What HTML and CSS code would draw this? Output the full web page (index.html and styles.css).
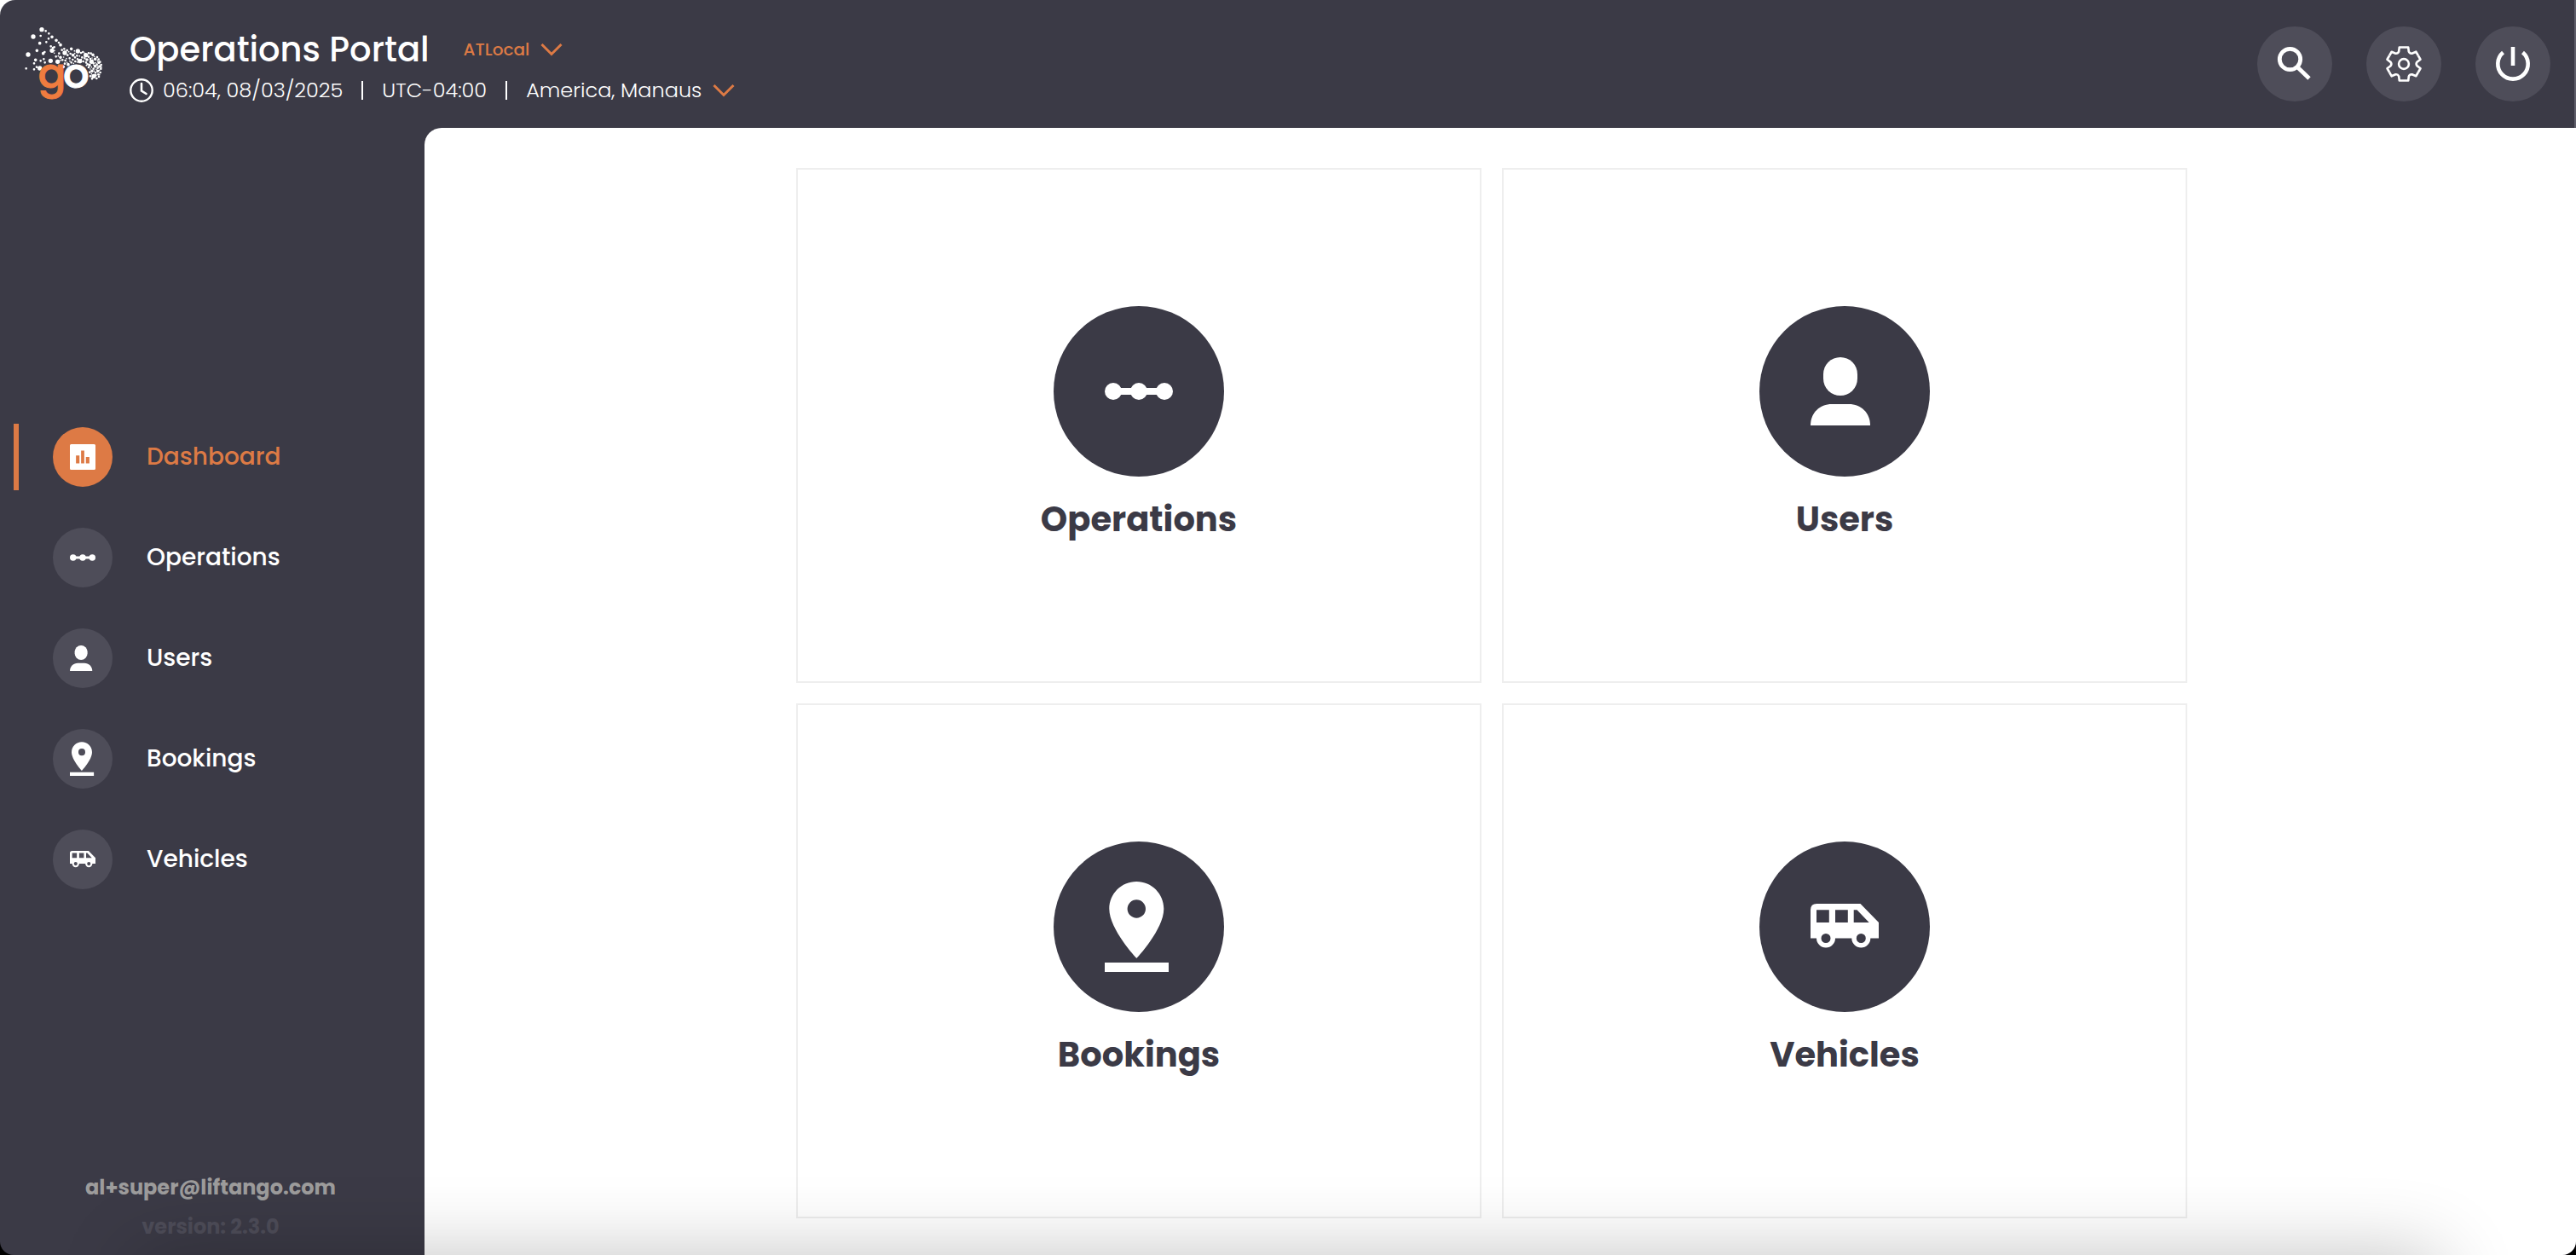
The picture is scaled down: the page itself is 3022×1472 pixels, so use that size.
FILE: index.html
```html
<!DOCTYPE html>
<html lang="en">
<head>
<meta charset="utf-8">
<meta name="viewport" content="width=device-width, initial-scale=1">
<title>Operations Portal</title>
<link rel="stylesheet" href="styles.css">
</head>
<body>
<svg class="sprite" aria-hidden="true">
  <symbol id="i-dashboard" viewBox="0 0 80 80"><path fill-rule="evenodd" d="M4 0H76Q80 0 80 4V76Q80 80 76 80H4Q0 80 0 76V4Q0 0 4 0ZM19 35V60H30V35ZM35 20V60H45V20ZM50 40V60H61V40Z"/></symbol>
  <symbol id="i-operations" viewBox="0 0 80 80"><circle cx="10" cy="40" r="10"/><circle cx="40" cy="40" r="10"/><circle cx="70" cy="40" r="10"/><path d="M10 36H70V44H10Z"/></symbol>
  <symbol id="i-users" viewBox="0 0 80 80"><rect x="15" width="40" height="45" rx="20"/><path d="M0 80C0 65 11 55 25 55H45C59 55 70 65 70 80Z"/></symbol>
  <symbol id="i-bookings" viewBox="0 0 80 80" overflow="visible"><path fill-rule="evenodd" d="M37.3 -13C19.6 -13 5.3 1.3 5.3 19C5.3 43 37.3 77 37.3 77S69.3 43 69.3 19C69.3 1.3 55 -13 37.3 -13ZM37.3 8.3A10.7 10.7 0 1 1 37.3 29.7A10.7 10.7 0 1 1 37.3 8.3ZM0 82H75V93H0Z"/></symbol>
  <symbol id="i-vehicles" viewBox="0 0 80 80"><path fill-rule="evenodd" d="M7.3 13H58.5L80 35V53.5H70.3A11 11 0 0 1 48.3 53.5H29A11 11 0 0 1 7 53.5H0V20.3Q0 13 7.3 13ZM7 20.3V35H21.8V20.3ZM29 20.3V35H43.8V20.3ZM50.7 20.3V35H68.7L54.5 20.3ZM18 48A5.5 5.5 0 1 0 18 59A5.5 5.5 0 1 0 18 48ZM59.3 48A5.5 5.5 0 1 0 59.3 59A5.5 5.5 0 1 0 59.3 48Z"/></symbol>
  <symbol id="i-chevron" viewBox="0 0 26 16"><path d="M1.500 2L13 13.500L24.500 2" fill="none" stroke="currentColor" stroke-width="3"/></symbol>
  <symbol id="i-clock" viewBox="0 0 28 28"><circle cx="14" cy="14" r="12.700" fill="none" stroke="currentColor" stroke-width="2.400"/><path d="M14 6V14.500L19.500 18" fill="none" stroke="currentColor" stroke-width="2.600" stroke-linecap="round"/></symbol>
</svg>

<div class="app">
  <header class="header">
    <svg class="logo" viewBox="0 0 330 330" role="img" aria-label="go">
      <g fill="none" stroke="#fff" stroke-linecap="round">
        <path stroke-width="16" d="M87 44h0M57 69h0M39 132h0M80 180h0M123 118h0M118 154h0M143 157h0M168 126h0M214 120h0M242 134h0M221 155h0M262 157h0M270 208h0"/>
        <path stroke-width="11" d="M80 92h0M70 118h0M92 128h0M65 151h0M123 70h0M138 82h0M153 98h0M153 142h0M191 112h0M163 175h0M197 134h0M180 167h0M267 133h0M288 160h0M284 190h0M291 174h0M264 190h0M275 148h0M246 150h0M255 169h0M275 173h0"/>
        <path stroke-width="8" d="M101 49h0M112 58h0M83 66h0M103 88h0M111 76h0M147 90h0M119 103h0M131 106h0M126 108h0M97 123h0M83 154h0M94 148h0M60 163h0M60 184h0M32 181h0M69 176h0M98 160h0M137 139h0M148 128h0M158 116h0M166 112h0M176 117h0M178 134h0M188 129h0M185 145h0M196 150h0M204 142h0M211 136h0M225 126h0M232 123h0M229 142h0M238 145h0M170 153h0M160 151h0M168 164h0M191 160h0M205 156h0M213 148h0M233 156h0M243 160h0M252 140h0M252 127h0M260 128h0M258 147h0M269 163h0M282 141h0M287 149h0M292 158h0M281 167h0M296 168h0M295 182h0M293 195h0M288 210h0M280 216h0M264 217h0M258 208h0M276 196h0M256 194h0M269 182h0M284 179h0M252 177h0M248 166h0M277 205h0M286 202h0"/>
        <path stroke-width="5" d="M132 118h0M131 127h0M145 137h0M164 141h0M174 146h0M182 122h0M202 119h0M203 128h0M220 137h0M226 149h0M238 127h0M247 136h0M272 139h0M264 144h0M266 151h0M283 154h0M276 161h0M262 176h0M258 183h0M290 187h0M272 190h0M279 184h0M285 172h0M244 170h0M212 159h0M199 163h0M186 155h0M176 160h0M153 152h0M270 169h0M297 176h0M262 200h0M290 203h0"/>
      </g>
      <g class="logo-text"><text x="74" y="248" fill="#ef7c3f" stroke="#ef7c3f">g</text><text x="162" y="248" fill="#fff" stroke="#fff">o</text></g>
    </svg>

    <div class="heading">
      <div class="heading-top">
        <h1 class="title">Operations Portal</h1>
        <label class="picker picker-env">
          <select class="picker-select" aria-label="Environment"><option>ATLocal</option></select>
          <svg class="chevron"><use href="#i-chevron"/></svg>
        </label>
      </div>
      <div class="heading-meta">
        <svg class="clock" aria-hidden="true"><use href="#i-clock"/></svg>
        <time datetime="2025-03-08T06:04-04:00">06:04, 08/03/2025</time>
        <span class="divider"></span>
        <span>UTC-04:00</span>
        <span class="divider"></span>
        <label class="picker">
          <select class="picker-select" aria-label="Time zone"><option>America, Manaus</option></select>
          <svg class="chevron"><use href="#i-chevron"/></svg>
        </label>
      </div>
    </div>

    <div class="actions">
      <button class="action" type="button" aria-label="Search">
        <svg class="action-icon" viewBox="0 0 88 88"><circle cx="38.500" cy="38.500" r="12.200" stroke-width="4.800"/><path stroke-width="4.800" d="M48 48.500L61 61"/></svg>
      </button>
      <button class="action" type="button" aria-label="Settings">
        <svg class="action-icon" viewBox="-44 -44 88 88"><defs><path id="gear-tooth" d="M0 -19.500H5.200L5.800 -14.500Q7 -11.900 9.600 -12.300L14.300 -14.300L16.900 -9.750"/></defs>
          <g stroke-width="2.600" stroke-linejoin="round"><use href="#gear-tooth"/><use href="#gear-tooth" transform="rotate(60)"/><use href="#gear-tooth" transform="rotate(120)"/><use href="#gear-tooth" transform="rotate(180)"/><use href="#gear-tooth" transform="rotate(240)"/><use href="#gear-tooth" transform="rotate(300)"/><circle r="5.900"/></g></svg>
      </button>
      <button class="action" type="button" aria-label="Log out">
        <svg class="action-icon" viewBox="0 0 88 88"><path stroke-width="4.600" d="M32.500 30.500A17.700 17.700 0 1 0 55.500 30.500M44 24V46"/></svg>
      </button>
    </div>
  </header>

  <div class="body">
    <aside class="sidebar">
      <nav class="nav">
        <a class="nav-link nav-link-active" href="#dashboard" aria-current="page"><span class="nav-icon"><svg><use href="#i-dashboard"/></svg></span>Dashboard</a>
        <a class="nav-link" href="#operations"><span class="nav-icon"><svg><use href="#i-operations"/></svg></span>Operations</a>
        <a class="nav-link" href="#users"><span class="nav-icon"><svg><use href="#i-users"/></svg></span>Users</a>
        <a class="nav-link" href="#bookings"><span class="nav-icon"><svg><use href="#i-bookings"/></svg></span>Bookings</a>
        <a class="nav-link" href="#vehicles"><span class="nav-icon"><svg><use href="#i-vehicles"/></svg></span>Vehicles</a>
      </nav>
      <footer class="account">
        <p class="email">al+super@liftango.com</p>
        <p class="version">version: 2.3.0</p>
      </footer>
    </aside>

    <main class="main">
      <div class="cards">
        <a class="card" href="#operations"><span class="card-icon"><svg><use href="#i-operations"/></svg></span>Operations</a>
        <a class="card" href="#users"><span class="card-icon"><svg><use href="#i-users"/></svg></span>Users</a>
        <a class="card" href="#bookings"><span class="card-icon"><svg><use href="#i-bookings"/></svg></span>Bookings</a>
        <a class="card" href="#vehicles"><span class="card-icon"><svg><use href="#i-vehicles"/></svg></span>Vehicles</a>
      </div>
    </main>
  </div>
</div>
</body>
</html>
```
FILE: styles.css
```css
:root {
  --ink: #3b3a46;
  --ink-light: #4e4d59;
  --accent: #dd7a45;
}

* { box-sizing: border-box; }

html { background: linear-gradient(#fff 50%, #000 50%); }

body {
  margin: 0;
  font-family: Poppins, Inter, "Open Sans", sans-serif;
  color: #fff;
}

h1, p { margin: 0; }
a { color: inherit; text-decoration: none; }
svg { display: block; fill: currentColor; }
.sprite { position: absolute; width: 0; height: 0; }

.app {
  position: relative;
  display: flex;
  flex-direction: column;
  min-height: 100vh;
  overflow: hidden;
  background: var(--ink);
  border-radius: 18px 0 16px 16px;
}

/* soft shade along the bottom edge of the window */
.app::after {
  content: "";
  position: absolute;
  top: 100%;
  left: 160px;
  right: 160px;
  height: 160px;
  box-shadow: 0 0 90px rgba(0, 0, 0, 0.24);
  pointer-events: none;
}

.header {
  display: flex;
  align-items: center;
  height: 150px;
  padding: 0 28px 0 20px;
  border-right: 2px solid #5f5e6a;
}

.logo { width: 110px; height: 110px; margin-right: 22px; }
.logo-text { font-size: 144px; font-weight: 500; stroke-width: 3px; stroke-linejoin: round; }

.heading { padding-top: 2px; }
.heading-top, .heading-meta, .picker { display: flex; align-items: center; }
.title { font-size: 40px; line-height: 60px; font-weight: 500; }
.picker { gap: 12px; }
.picker-env { margin-left: 40px; color: var(--accent); font-size: 20px; font-weight: 500; }
.picker-select {
  appearance: none;
  padding: 0;
  border: 0;
  background: none;
  color: inherit;
  font: inherit;
  line-height: 36px;
}
.chevron { width: 26px; height: 16px; color: var(--accent); }
.heading-meta { font-size: 24px; line-height: 36px; font-weight: 300; }
.clock { width: 28px; height: 28px; margin-right: 11px; }
.divider { width: 2px; height: 22px; margin: 0 22px; background: #fff; }

.actions { display: flex; gap: 40px; margin-left: auto; }
.action {
  width: 88px;
  height: 88px;
  padding: 0;
  border: 0;
  border-radius: 50%;
  background: var(--ink-light);
  color: #fff;
}
.action-icon { width: 88px; height: 88px; fill: none; stroke: currentColor; }

.body { display: flex; flex: 1; }

.sidebar { display: flex; flex-direction: column; width: 498px; }
.nav {
  display: flex;
  flex: 1;
  flex-direction: column;
  justify-content: center;
  gap: 40px;
  padding: 24px 0 0 16px;
}
.nav-link {
  display: flex;
  align-items: center;
  gap: 40px;
  height: 78px;
  padding-left: 40px;
  border-left: 6px solid transparent;
  font-size: 28px;
  font-weight: 500;
}
.nav-icon { padding: 20px; border-radius: 50%; background: var(--ink-light); }
.nav-icon svg { width: 30px; height: 30px; overflow: visible; }
.nav-link-active { border-color: var(--accent); color: var(--accent); }
.nav-link-active .nav-icon { background: var(--accent); color: #fff; }

.account {
  padding: 0 4px 10px 0;
  text-align: center;
  font-size: 24px;
  line-height: 46px;
  font-weight: 700;
}
.email { color: #9d9c9c; }
.version { color: #4e4d59; }

.main {
  flex: 1;
  display: flex;
  padding: 47px 20px 43px 0;
  border-top-left-radius: 20px;
  background: #fff;
}
.cards {
  display: grid;
  flex: 1;
  grid-template-columns: 1fr 1fr;
  grid-auto-rows: 1fr;
  gap: 24px;
  max-width: 1632px;
  margin: 0 auto;
}
.card {
  display: flex;
  flex-direction: column;
  align-items: center;
  justify-content: center;
  gap: 20px;
  border: 2px solid #eee;
  color: var(--ink);
  font-size: 40px;
  line-height: 60px;
  font-weight: 700;
}
.card-icon { padding: 60px; border-radius: 50%; background: var(--ink); color: #fff; }
.card-icon svg { width: 80px; height: 80px; overflow: visible; }
```
